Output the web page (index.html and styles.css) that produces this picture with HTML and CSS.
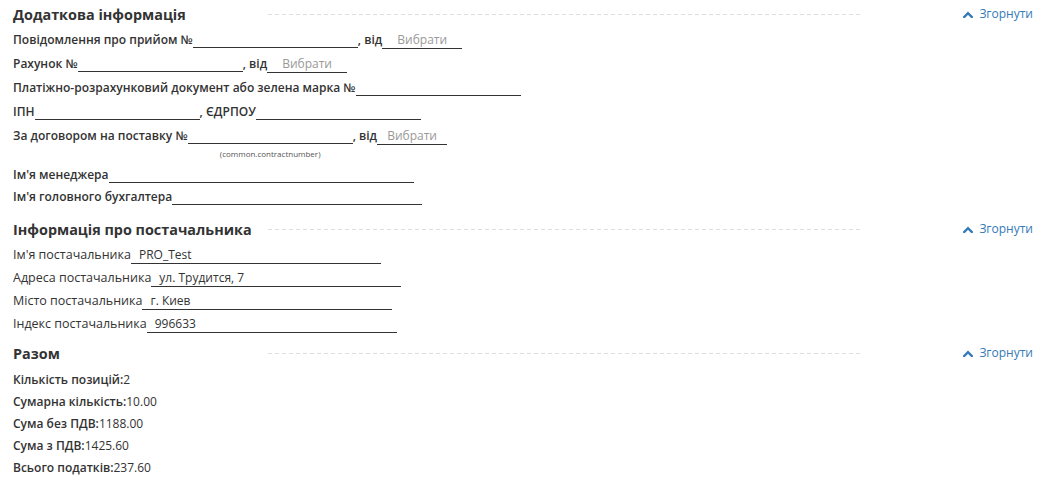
FILE: index.html
```html
<!DOCTYPE html>
<html lang="uk">
<head>
<meta charset="utf-8">
<title>Додаткова інформація</title>
<link rel="stylesheet" href="styles.css">
</head>
<body>
<div class="page">
  <section class="block block-extra">
    <div class="block-head">
      <h2 class="block-title">Додаткова інформація</h2>
      <div class="block-rule"></div>
      <a class="toggle" href="#"><svg class="chev" width="10" height="7" viewBox="0 0 10 7"><polyline points="1.2,6 5,2.2 8.8,6" fill="none" stroke="currentColor" stroke-width="2.4" stroke-linecap="square"/></svg>Згорнути</a>
    </div>
    <div class="row"><span class="lbl">Повідомлення про прийом №</span><span class="field empty w165"></span><span class="lbl">, від</span><span class="field date w80">Вибрати</span></div>
    <div class="row"><span class="lbl">Рахунок №</span><span class="field empty w165"></span><span class="lbl">, від</span><span class="field date w80">Вибрати</span></div>
    <div class="row"><span class="lbl">Платіжно-розрахунковий документ або зелена марка №</span><span class="field empty w165"></span></div>
    <div class="row"><span class="lbl">ІПН</span><span class="field empty w165"></span><span class="lbl">, ЄДРПОУ</span><span class="field empty w165"></span></div>
    <div class="row"><span class="lbl">За договором на поставку №</span><span class="field empty w165 has-note"><span class="note">(common.contractnumber)</span></span><span class="lbl">, від</span><span class="field date w70">Вибрати</span></div>
    <div class="note-row"></div>
    <div class="row row-22"><span class="lbl">Ім'я менеджера</span><span class="field empty w305"></span></div>
    <div class="row row-22"><span class="lbl">Ім'я головного бухгалтера</span><span class="field empty w250"></span></div>
  </section>

  <section class="block block-supplier">
    <div class="block-head">
      <h2 class="block-title">Інформація про постачальника</h2>
      <div class="block-rule"></div>
      <a class="toggle" href="#"><svg class="chev" width="10" height="7" viewBox="0 0 10 7"><polyline points="1.2,6 5,2.2 8.8,6" fill="none" stroke="currentColor" stroke-width="2.4" stroke-linecap="square"/></svg>Згорнути</a>
    </div>
    <div class="row row-23"><span class="lbl-plain">Ім'я постачальника</span><span class="field value w250">PRO_Test</span></div>
    <div class="row row-23"><span class="lbl-plain">Адреса постачальника</span><span class="field value w250">ул. Трудится, 7</span></div>
    <div class="row row-23"><span class="lbl-plain">Місто постачальника</span><span class="field value w250">г. Киев</span></div>
    <div class="row row-23"><span class="lbl-plain">Індекс постачальника</span><span class="field value w250">996633</span></div>
  </section>

  <section class="block block-total">
    <div class="block-head">
      <h2 class="block-title">Разом</h2>
      <div class="block-rule"></div>
      <a class="toggle" href="#"><svg class="chev" width="10" height="7" viewBox="0 0 10 7"><polyline points="1.2,6 5,2.2 8.8,6" fill="none" stroke="currentColor" stroke-width="2.4" stroke-linecap="square"/></svg>Згорнути</a>
    </div>
    <div class="sum-list">
      <div class="row row-22"><span class="lbl">Кількість позицій:</span>2</div>
      <div class="row row-22"><span class="lbl">Сумарна кількість:</span>10.00</div>
      <div class="row row-22"><span class="lbl">Сума без ПДВ:</span>1188.00</div>
      <div class="row row-22"><span class="lbl">Сума з ПДВ:</span>1425.60</div>
      <div class="row row-22"><span class="lbl">Всього податків:</span>237.60</div>
    </div>
  </section>
</div>
</body>
</html>
```

FILE: styles.css
```css
html, body {
  margin: 0;
  background: #fff;
}

body {
  font-family: "Open Sans", "Noto Sans", sans-serif;
  font-size: 12px;
  color: #333;
}

.page {
  padding: 2px 21px 0 13px;
}

.block-supplier {
  margin-top: 9px;
}

.block-total {
  margin-top: 6px;
}

.block-head {
  display: grid;
  grid-template-columns: 255px 1fr 171px;
  align-items: center;
  height: 26px;
}

.block-title {
  margin: 0;
  font-size: 14.4px;
  font-weight: 700;
  line-height: 26px;
  white-space: nowrap;
  color: #333;
}

.block-rule {
  height: 1px;
  margin-bottom: 2px;
  background: repeating-linear-gradient(to right, #dedede 0 4px, transparent 4px 7px);
}

.toggle {
  justify-self: end;
  display: flex;
  align-items: center;
  gap: 6px;
  color: #337ab7;
  text-decoration: none;
  font-size: 12px;
  line-height: 18px;
  margin-bottom: 2px;
}

.chev {
  display: block;
}

.row {
  height: 24px;
  line-height: 24px;
  white-space: nowrap;
}

.row-23 {
  height: 23px;
  line-height: 23px;
}

.row-22 {
  height: 22px;
  line-height: 22px;
}

.lbl {
  font-weight: 600;
}

.lbl-plain {
  font-weight: 400;
  font-size: 12.5px;
}

.field {
  display: inline-block;
  box-sizing: border-box;
  line-height: 14px;
  padding-bottom: 1px;
  border-bottom: 1px solid #333;
  vertical-align: baseline;
}

.field.empty {
  height: 14px;
  padding: 0;
  vertical-align: -4px;
}

.field.date {
  color: #999;
  text-align: center;
}

.field.value {
  padding-left: 8px;
}

.w70 { width: 70px; }
.w80 { width: 80px; }
.w165 { width: 165px; }
.w250 { width: 250px; }
.w305 { width: 305px; }

.has-note {
  position: relative;
}

.note {
  position: absolute;
  left: 0;
  right: 0;
  top: 100%;
  margin-top: 6px;
  text-align: center;
  font-size: 8px;
  line-height: 10px;
  color: #555;
}

.note-row {
  height: 16px;
}

.sum-list {
  padding-top: 2px;
}
```
